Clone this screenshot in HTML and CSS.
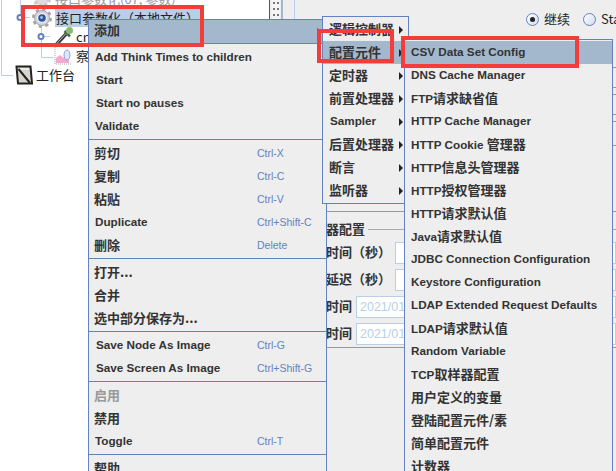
FILE: index.html
```html
<!DOCTYPE html>
<html lang="zh">
<head>
<meta charset="utf-8">
<title>JMeter</title>
<link rel="stylesheet" href="styles.css">
</head>
<body>
<div class="app">
  <div class="tree">
    <svg class="wires" width="90" height="90" viewBox="0 0 90 90">
      <path d="M1.5 0V75.500H13M20.500 0V17.500M20.500 17.500H30M41.500 28V57.500H53M41.500 36.500H50" fill="none" stroke="#b8cfe5"/>
      <circle cx="20" cy="17.500" r="2.500" fill="#fff" stroke="#6382bf" stroke-width="2"/>
      <circle cx="41" cy="36.500" r="2.500" fill="#fff" stroke="#6382bf" stroke-width="2"/>
    </svg>
    <div class="node n1 off">
      <svg class="ico" width="22" height="22" viewBox="0 0 22 22"><circle cx="11" cy="11" r="7" fill="#ddd" stroke="#ccc" stroke-width="4" stroke-dasharray="3 2.500"/></svg>
      <span class="label">接口参数化(07, 参数)</span>
    </div>
    <div class="node n1">
      <svg class="ico" width="22" height="22" viewBox="0 0 22 22"><circle cx="11" cy="11" r="8.500" fill="none" stroke="#a4a6aa" stroke-width="3" stroke-dasharray="3.300 3.370"/><circle cx="11" cy="11" r="7.500" fill="#d4d6da" stroke="#a4a6aa"/><circle cx="11" cy="11" r="5" fill="#f0f2f6"/><circle cx="11" cy="11" r="3.800" fill="#2d55a0"/><circle cx="10.500" cy="10.500" r="1.400" fill="#a8bede"/></svg>
      <span class="label sel">接口参数化（本地文件）</span>
    </div>
    <div class="node n2">
      <svg class="ico" width="22" height="22" viewBox="0 0 22 22"><path d="M3 20 L14 8" stroke="#3c3c3c" stroke-width="3.500"/><path d="M3.500 19 L13.500 8" stroke="#b8b8b8" stroke-width="1"/><path d="M12.500 5 L18 10.500" stroke="#4a6a40" stroke-width="2.500"/><ellipse cx="17.500" cy="4.500" rx="3.500" ry="3.500" fill="#86bc6c"/></svg>
      <span class="label">cn</span>
    </div>
    <div class="node n2">
      <svg class="ico" width="22" height="22" viewBox="0 0 22 22"><path d="M3 2V19H19" fill="none" stroke="#aaa" stroke-dasharray="1 1"/><path d="M4 18V13L8 10L12 13L17 7V18Z" fill="#f5a8d0"/><ellipse cx="15" cy="10" rx="3" ry="5" fill="#dfe8f8" stroke="#8aa5d8"/></svg>
      <span class="label">察看结果树</span>
    </div>
    <div class="node n0">
      <svg class="ico" width="20" height="20" viewBox="0 0 20 20"><path d="M1.500 1.500H15.500L17 18.500H3Z" fill="#d6d6cc" stroke="#222" stroke-width="2"/><path d="M4 4H14" stroke="#fff"/><path d="M3.500 4L15 18" stroke="#222" stroke-width="2"/></svg>
      <span class="label">工作台</span>
    </div>
  </div>
  <div class="split"><div class="grip"></div></div>
  <div class="main">
    <div class="radios">
      <span class="radio on"></span><span class="rtext">继续</span>
      <span class="radio"></span><span class="rtext">Start Next Thread Loop</span>
    </div>
    <div class="field f1"></div>
    <div class="field f2"></div>
    <div class="field f3"></div>
    <div class="rule r1"></div>
    <div class="gtitle"><span>调度器配置</span><i></i></div>
    <div class="frow"><span>持续时间（秒）</span><div class="input"></div></div>
    <div class="frow"><span>启动延迟（秒）</span><div class="input"></div></div>
    <div class="frow"><span>启动时间</span><div class="input">2021/01/01 00:00:00</div></div>
    <div class="frow"><span>结束时间</span><div class="input">2021/01/01 00:00:00</div></div>
    <div class="rule r2"></div>
  </div>
</div>

<div class="menu m1">
  <div class="item hi"><b class="c">添加</b><em class="arrow"></em></div>
  <div class="sep"></div>
  <div class="item"><b>Add Think Times to children</b></div>
  <div class="item"><b class="la">Start</b></div>
  <div class="item"><b class="la">Start no pauses</b></div>
  <div class="item"><b>Validate</b></div>
  <div class="sep"></div>
  <div class="item"><b class="c">剪切</b><kbd>Ctrl-X</kbd></div>
  <div class="item"><b class="c">复制</b><kbd>Ctrl-C</kbd></div>
  <div class="item"><b class="c">粘贴</b><kbd>Ctrl-V</kbd></div>
  <div class="item"><b>Duplicate</b><kbd>Ctrl+Shift-C</kbd></div>
  <div class="item"><b class="c">删除</b><kbd>Delete</kbd></div>
  <div class="sep"></div>
  <div class="item"><b class="c">打开...</b></div>
  <div class="item"><b class="c">合并</b></div>
  <div class="item"><b class="c">选中部分保存为...</b></div>
  <div class="sep"></div>
  <div class="item"><b class="la">Save Node As Image</b><kbd>Ctrl-G</kbd></div>
  <div class="item"><b class="la">Save Screen As Image</b><kbd>Ctrl+Shift-G</kbd></div>
  <div class="sep"></div>
  <div class="item dis"><b class="c">启用</b></div>
  <div class="item"><b class="c">禁用</b></div>
  <div class="item"><b>Toggle</b><kbd>Ctrl-T</kbd></div>
  <div class="sep"></div>
  <div class="item"><b class="c">帮助</b></div>
</div>

<div class="menu m2">
  <div class="item"><b class="c">逻辑控制器</b><em class="arrow"></em></div>
  <div class="item hi"><b class="c">配置元件</b><em class="arrow"></em></div>
  <div class="item"><b class="c">定时器</b><em class="arrow"></em></div>
  <div class="item"><b class="c">前置处理器</b><em class="arrow"></em></div>
  <div class="item"><b class="la">Sampler</b><em class="arrow"></em></div>
  <div class="item"><b class="c">后置处理器</b><em class="arrow"></em></div>
  <div class="item"><b class="c">断言</b><em class="arrow"></em></div>
  <div class="item"><b class="c">监听器</b><em class="arrow"></em></div>
</div>

<div class="menu m3">
  <div class="item hi"><b>CSV Data Set Config</b></div>
  <div class="item"><b>DNS Cache Manager</b></div>
  <div class="item"><b>FTP<span class="c">请求缺省值</span></b></div>
  <div class="item"><b>HTTP Cache Manager</b></div>
  <div class="item"><b>HTTP Cookie <span class="c">管理器</span></b></div>
  <div class="item"><b>HTTP<span class="c">信息头管理器</span></b></div>
  <div class="item"><b>HTTP<span class="c">授权管理器</span></b></div>
  <div class="item"><b>HTTP<span class="c">请求默认值</span></b></div>
  <div class="item"><b>Java<span class="c">请求默认值</span></b></div>
  <div class="item"><b>JDBC Connection Configuration</b></div>
  <div class="item"><b>Keystore Configuration</b></div>
  <div class="item"><b>LDAP Extended Request Defaults</b></div>
  <div class="item"><b>LDAP<span class="c">请求默认值</span></b></div>
  <div class="item"><b>Random Variable</b></div>
  <div class="item"><b>TCP<span class="c">取样器配置</span></b></div>
  <div class="item"><b class="c">用户定义的变量</b></div>
  <div class="item"><b class="c">登陆配置元件/素</b></div>
  <div class="item"><b class="c">简单配置元件</b></div>
  <div class="item"><b class="c">计数器</b></div>
</div>

<div class="mark k1"></div>
<div class="mark k2"></div>
<div class="mark k3"></div>
</body>
</html>
```
FILE: styles.css
```css
* { box-sizing: border-box; }
html, body { margin: 0; padding: 0; }
body {
  width: 616px; height: 471px; overflow: hidden; position: relative;
  background: #eee; color: #222;
  font-family: "Liberation Sans", "Noto Sans CJK SC", sans-serif;
}
.app { display: flex; height: 471px; }

/* tree */
.tree { width: 270px; flex: none; background: #fff; position: relative; padding-top: 0; margin-top: -11px; border-right: 1px solid #555; overflow: hidden; }
.wires { position: absolute; left: 0; top: 11px; }
.node { height: 19px; display: flex; align-items: center; position: relative; white-space: nowrap; }
.label { font: 13px/18px "Noto Sans CJK SC", sans-serif; color: #222; }
.sel { background: #b8cfe5; padding: 0 5px 0 1px; }
.n1 { padding-left: 31px; gap: 2px; }
.n2 { padding-left: 52px; gap: 2px; }
.n0 { padding-left: 15px; gap: 1px; }
.off .label { color: #999; }

/* splitter */
.split { width: 13px; flex: none; background: #eee; border-right: 2px solid #a3b8cc; display: flex; justify-content: center; }
.grip { width: 8px; background: radial-gradient(#777 0.7px, transparent 1px) 0 0 / 4px 6px, #f4f4f4; }

/* right panel */
.main { flex: 1; min-width: 0; overflow: hidden; margin-left: 11px; border-left: 1px solid #b8cfe5; position: relative; padding-left: 5px; }
.radios { display: flex; align-items: center; height: 38px; white-space: nowrap; margin-left: 226px; }
.radio { width: 13px; height: 13px; border-radius: 50%; flex: none; border: 1px solid #6382bf; background: linear-gradient(135deg, #fff, #cfdcee); margin-right: 5px; position: relative; }
.radio.on::after { content: ""; position: absolute; left: 3px; top: 3px; width: 5px; height: 5px; border-radius: 50%; background: #222; }
.rtext { font: 13px/18px "Noto Sans CJK SC", "Liberation Sans", sans-serif; margin-right: 13px; }
.field { height: 21px; border-top: 1px solid #999; border-bottom: 1px solid #999; }
.f1 { margin-top: 29px; }
.f2 { margin-top: 6px; }
.f3 { margin-top: 6px; height: 25px; }
.rule { border-top: 1px solid #999; }
.r1 { margin-top: 65px; }
.r2 { margin-top: 2px; margin-left: -5px; }
.gtitle { display: flex; align-items: center; height: 18px; margin-top: 8px; gap: 3px; font: 700 13px/18px "Noto Sans CJK SC", sans-serif; color: #333; white-space: nowrap; }
.gtitle i { flex: 1; border-top: 1px solid #aaa; }
.frow { display: flex; align-items: center; gap: 4px; height: 22px; margin-top: 5px; font: 700 13px/18px "Noto Sans CJK SC", sans-serif; color: #333; white-space: nowrap; }
.frow span { padding-bottom: 2px; }
.gtitle + .frow { margin-top: 4px; }
.input { flex: 1; height: 22px; background: #fff; border: 1px solid #b8cfe5; padding-left: 3px; font: 12.500px/20px "Liberation Sans", sans-serif; color: #b8cfe5; overflow: hidden; }

/* menus */
.menu { position: absolute; background: #eee; border: 1px solid #6382bf; overflow: hidden; color: #333; }
.m1 { left: 88px; top: 19px; width: 239px; height: 470px; }
.m2 { left: 322px; top: 16px; width: 87px; height: 188px; padding-top: 1px; }
.m3 { left: 404px; top: 39px; width: 209px; height: 450px; padding-top: 1px; }
.item { height: 23px; display: flex; align-items: center; padding-left: 6px; position: relative; white-space: nowrap; }
.item b { font: 700 11.700px/20px "Liberation Sans", "Noto Sans CJK SC", sans-serif; padding-bottom: 4px; }
.m2 .item b, .m3 .item b { padding-bottom: 2px; padding-top: 1px; }
.item b.la { padding-left: 1px; }
.item .c { font: 700 13px/20px "Noto Sans CJK SC", "Liberation Sans", sans-serif; }
.m1 .item > .c { margin-left: -1px; }
.hi { background: #a3b8cc; }
.dis b { color: #999; }
.sep { height: 4px; border-top: 1px solid #6382bf; }
kbd { position: absolute; left: 168px; top: 1px; font: 10.500px/18px "Liberation Sans", sans-serif; color: #6382bf; }
.arrow { position: absolute; right: 5px; top: 8px; border-left: 4px solid #222; border-top: 4px solid transparent; border-bottom: 4px solid transparent; }

/* annotation boxes */
.mark { position: absolute; border: 4px solid #f33c3c; }
.k1 { left: 21px; top: 5px; width: 183px; height: 42px; }
.k2 { left: 317px; top: 29px; width: 77px; height: 34px; }
.k3 { left: 401px; top: 36px; width: 178px; height: 32px; }
```
